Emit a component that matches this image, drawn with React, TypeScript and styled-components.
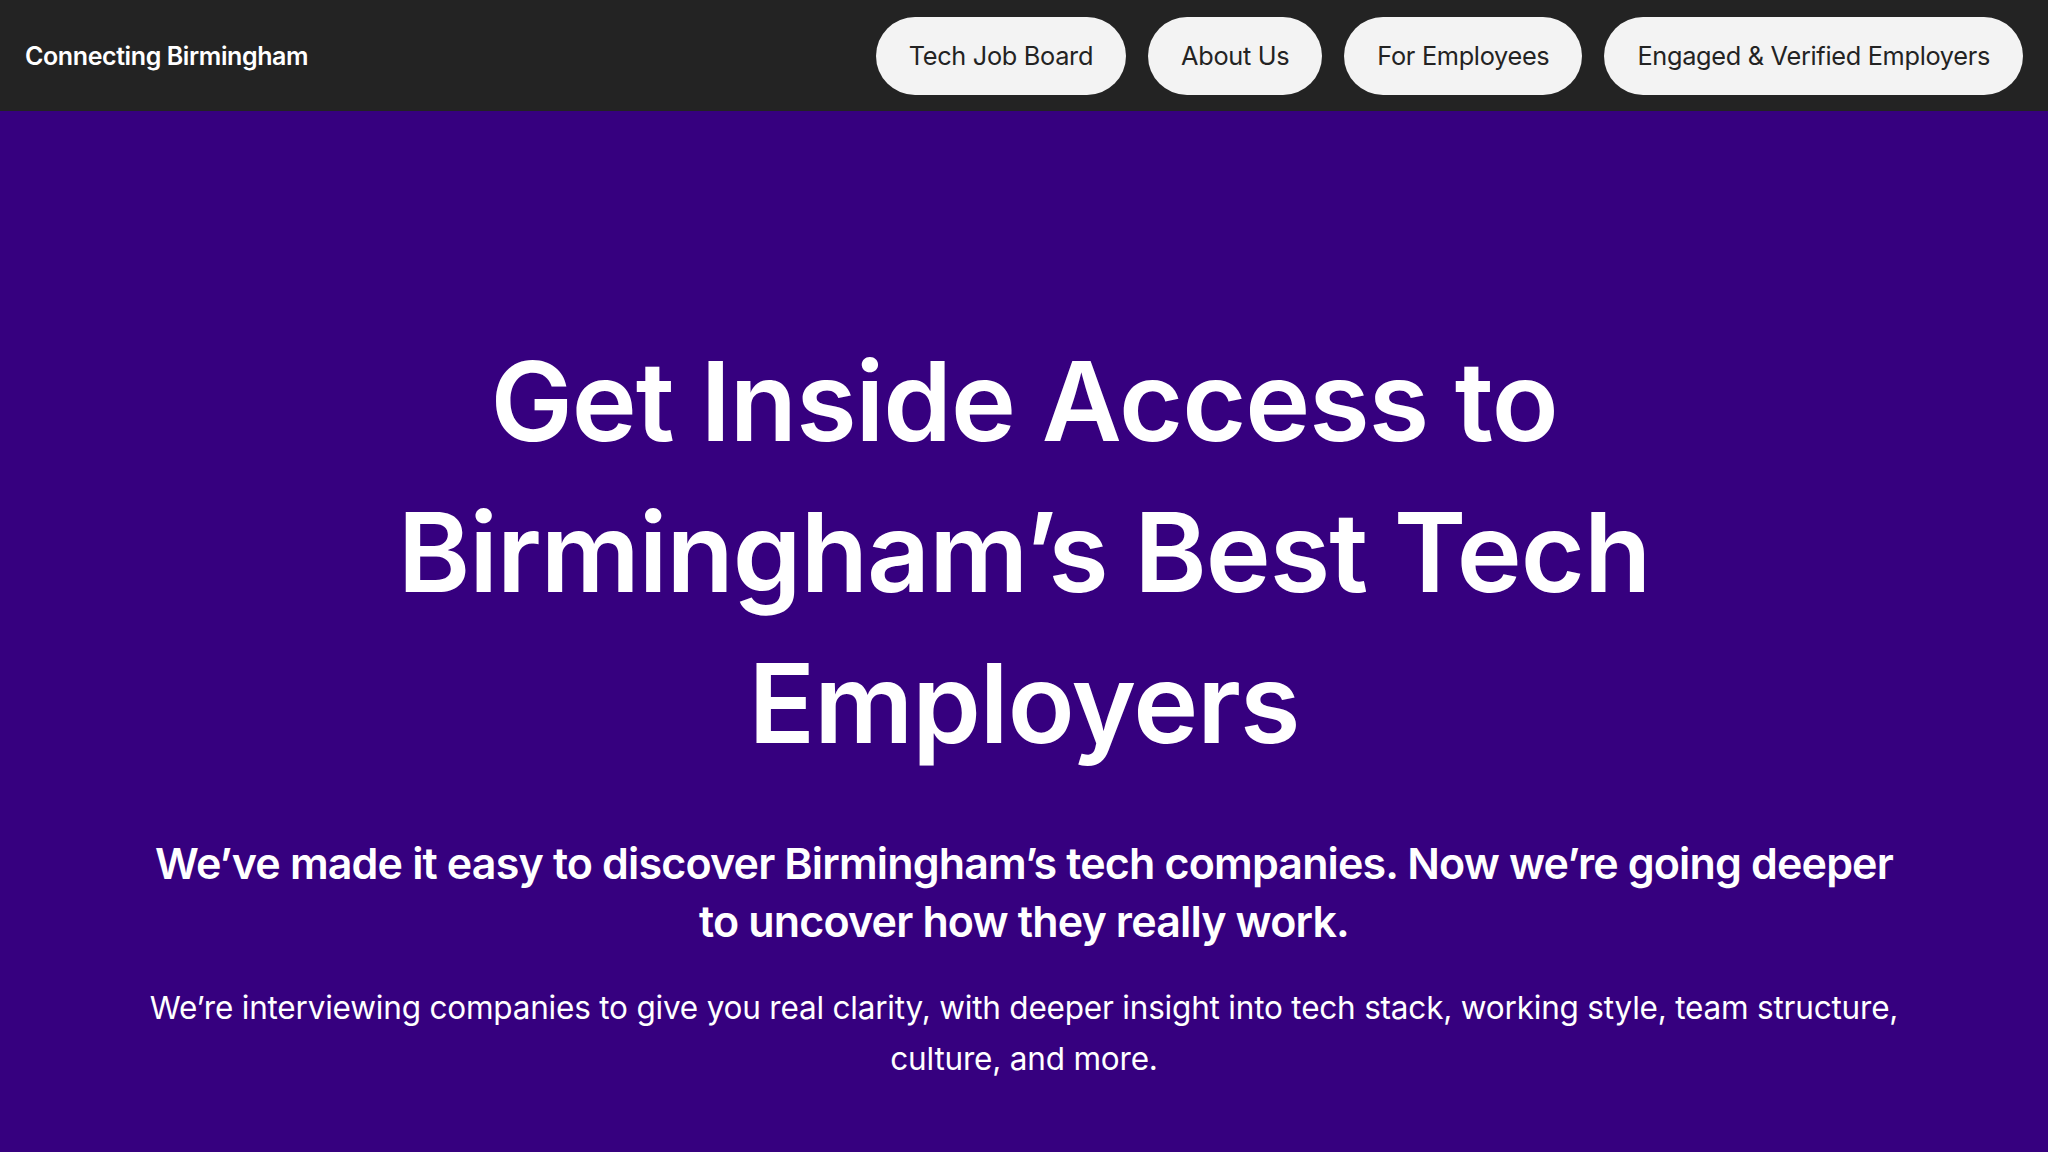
import React from "react";
import styled, { createGlobalStyle } from "styled-components";

const Global = createGlobalStyle`
  html, body { margin: 0; padding: 0; }
  body {
    background: #36007f;
    font-family: Inter, "Noto Sans", "Liberation Sans", sans-serif;
    -webkit-font-smoothing: antialiased;
  }
  * { box-sizing: border-box; }
`;

const Page = styled.div`
  min-height: 100vh;
  display: flex;
  flex-direction: column;
  background: #36007f;
`;

const Header = styled.header`
  height: 111px;
  background: #232323;
  display: flex;
  align-items: center;
  justify-content: space-between;
  padding: 0 25px;
`;

const Logo = styled.a`
  color: #ffffff;
  font-size: 25px;
  font-weight: 600;
  letter-spacing: -0.4px;
  text-decoration: none;
`;

const Nav = styled.nav`
  display: flex;
  gap: 22px;
`;

const NavButton = styled.a`
  height: 78px;
  display: inline-flex;
  align-items: center;
  padding: 0 33px;
  border-radius: 39px;
  background: #f3f3f3;
  color: #232323;
  font-size: 25.3px;
  font-weight: 400;
  letter-spacing: -0.3px;
  text-decoration: none;
`;

const Hero = styled.main`
  flex: 1;
  display: flex;
  flex-direction: column;
  align-items: center;
  padding: 215px 140px 80px;
  text-align: center;
  color: #ffffff;
`;

const Title = styled.h1`
  margin: 0;
  max-width: 1300px;
  font-size: 110px;
  line-height: 151px;
  font-weight: 600;
  letter-spacing: -1px;
`;

const Lead = styled.p`
  margin: 55px 0 0;
  font-size: 43px;
  line-height: 58px;
  font-weight: 600;
  letter-spacing: -0.85px;
`;

const Body = styled.p`
  margin: 32px 0 0;
  font-size: 31.5px;
  line-height: 51px;
  font-weight: 400;
  letter-spacing: -0.2px;
`;

export default function App() {
  const links = ["Tech Job Board", "About Us", "For Employees", "Engaged & Verified Employers"];
  return (
    <Page>
      <Global />
      <Header>
        <Logo href="#">Connecting Birmingham</Logo>
        <Nav>
          {links.map((l) => (
            <NavButton key={l} href="#">{l}</NavButton>
          ))}
        </Nav>
      </Header>
      <Hero>
        <Title>Get Inside Access to Birmingham’s Best Tech Employers</Title>
        <Lead>
          We’ve made it easy to discover Birmingham’s tech companies. Now we’re going deeper to uncover how they really work.
        </Lead>
        <Body>
          We’re interviewing companies to give you real clarity, with deeper insight into tech stack, working style, team structure, culture, and more.
        </Body>
      </Hero>
    </Page>
  );
}
